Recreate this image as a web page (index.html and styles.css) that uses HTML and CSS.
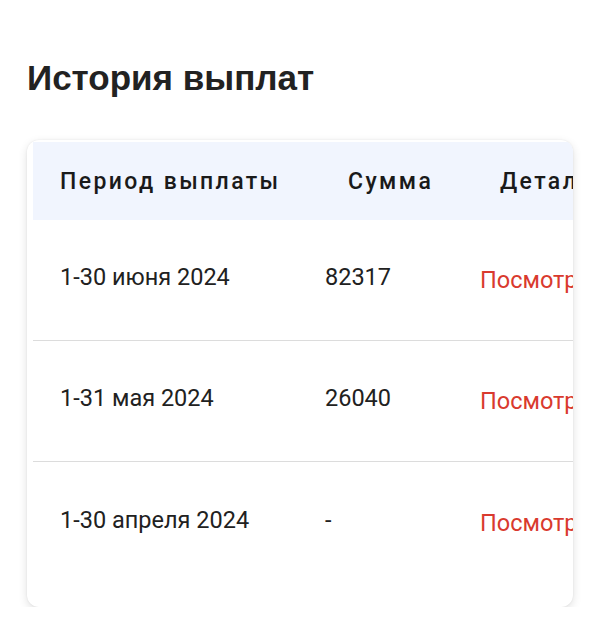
FILE: index.html
```html
<!DOCTYPE html>
<html lang="ru">
<head>
<meta charset="utf-8">
<link rel="stylesheet" href="styles.css">
</head>
<body>
<h1 class="title">История выплат</h1>
<div class="card">
  <div class="table">
    <div class="row head">
      <div class="cell c1">Период выплаты</div>
      <div class="cell c2">Сумма</div>
      <div class="cell c3">Детали</div>
    </div>
    <div class="row">
      <div class="cell c1">1-30 июня 2024</div>
      <div class="cell c2">82317</div>
      <div class="cell c3"><a class="link" href="#">Посмотреть</a></div>
    </div>
    <div class="row">
      <div class="cell c1">1-31 мая 2024</div>
      <div class="cell c2">26040</div>
      <div class="cell c3"><a class="link" href="#">Посмотреть</a></div>
    </div>
    <div class="row last">
      <div class="cell c1">1-30 апреля 2024</div>
      <div class="cell c2">-</div>
      <div class="cell c3"><a class="link" href="#">Посмотреть</a></div>
    </div>
  </div>
</div>
</body>
</html>
```
FILE: styles.css
```css
* { box-sizing: border-box; }
html, body { margin: 0; padding: 0; background: #fff; }
body {
  font-family: Roboto, "Noto Sans", sans-serif;
  color: #212121;
  padding: 58px 27px 0 27px;
}
.title {
  font-family: "Liberation Sans", Arial, sans-serif;
  font-weight: 700;
  font-size: 35px;
  line-height: 40px;
  margin: 0 0 42px 0;
  color: #222;
}
.card {
  width: 546px;
  height: 467px;
  border-radius: 12px;
  background: #fff;
  box-shadow: 0 3px 10px rgba(0,0,0,0.12), 0 0 2px rgba(0,0,0,0.08);
  overflow: hidden;
  padding: 2px 0 0 6px;
}
.table {
  width: 680px;
}
.row {
  display: grid;
  grid-template-columns: 265px 155px 260px;
  height: 121px;
  align-items: center;
  border-bottom: 1px solid #dcdcdc;
  font-size: 23.5px;
}
.row.last { border-bottom: none; }
.row.head {
  height: 78px;
  background: #f1f5fe;
  border-bottom: none;
  font-weight: 500;
  font-size: 23px;
  letter-spacing: 2.4px;
  color: #1a1a1a;
}
.cell { padding-left: 27px; white-space: nowrap; padding-bottom: 6px; }
.head .cell { padding-bottom: 0; }
.head .c2 { padding-left: 50px; }
.head .c3 { padding-left: 47px; }
.link {
  color: #d93a2e;
  text-decoration: none;
  font-weight: 400;
  display: inline-block;
  padding-top: 6px;
}
```
